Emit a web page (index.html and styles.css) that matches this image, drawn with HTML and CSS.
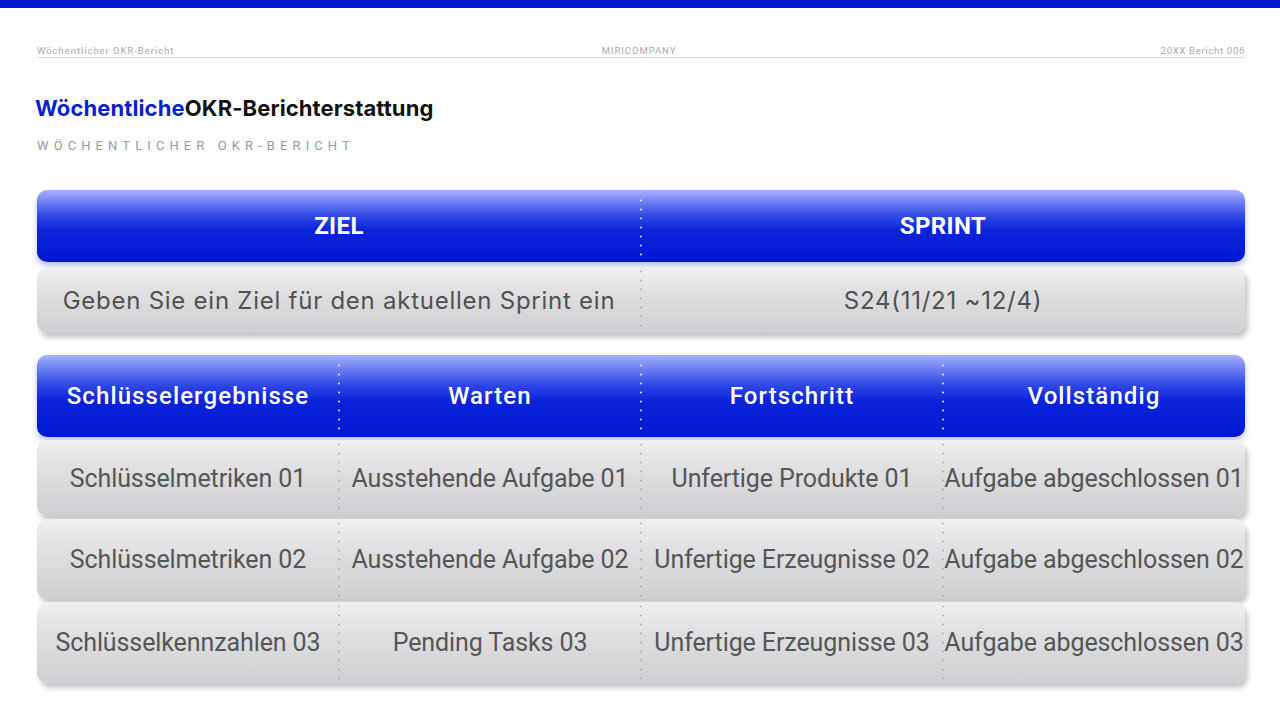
FILE: index.html
```html
<!DOCTYPE html>
<html lang="de">
<head>
<meta charset="utf-8">
<link rel="stylesheet" href="styles.css">
</head>
<body>
<div class="topbar"></div>
<div class="page">
  <header class="meta">
    <span class="meta-left">Wöchentlicher OKR-Bericht</span>
    <span class="meta-center">MIRICOMPANY</span>
    <span class="meta-right">20XX Bericht 006</span>
  </header>
  <h1 class="title"><span class="accent">Wöchentliche</span>OKR-Berichterstattung</h1>
  <p class="subtitle">WÖCHENTLICHER OKR-BERICHT</p>

  <section class="table two">
    <div class="row head">
      <div class="cell">ZIEL</div>
      <div class="cell">SPRINT</div>
    </div>
    <div class="row body goal">
      <div class="cell">Geben Sie ein Ziel für den aktuellen Sprint ein</div>
      <div class="cell">S24(11/21 ~12/4)</div>
    </div>
  </section>

  <section class="table four">
    <div class="row head kr">
      <div class="cell">Schlüsselergebnisse</div>
      <div class="cell">Warten</div>
      <div class="cell">Fortschritt</div>
      <div class="cell">Vollständig</div>
    </div>
    <div class="row body kr-row r1">
      <div class="cell">Schlüsselmetriken 01</div>
      <div class="cell">Ausstehende Aufgabe 01</div>
      <div class="cell">Unfertige Produkte 01</div>
      <div class="cell">Aufgabe abgeschlossen 01</div>
    </div>
    <div class="row body kr-row r2">
      <div class="cell">Schlüsselmetriken 02</div>
      <div class="cell">Ausstehende Aufgabe 02</div>
      <div class="cell">Unfertige Erzeugnisse 02</div>
      <div class="cell">Aufgabe abgeschlossen 02</div>
    </div>
    <div class="row body kr-row r3">
      <div class="cell">Schlüsselkennzahlen 03</div>
      <div class="cell">Pending Tasks 03</div>
      <div class="cell">Unfertige Erzeugnisse 03</div>
      <div class="cell">Aufgabe abgeschlossen 03</div>
    </div>
  </section>
</div>
</body>
</html>
```

FILE: styles.css
```css
* { box-sizing: border-box; margin: 0; padding: 0; }
html, body { width: 1280px; height: 720px; overflow: hidden; background: #fff; }
body { font-family: "Roboto", "Liberation Sans", sans-serif; }

.topbar { height: 8px; background: #0318d2; }

.page { padding: 0 35px 0 37px; }

.meta {
  display: grid;
  grid-template-columns: 1fr auto 1fr;
  align-items: end;
  margin-top: 36px;
  height: 14px;
  padding-bottom: 1px;
  border-bottom: 1px solid #d9d9d9;
  font-size: 9.5px;
  letter-spacing: 0.95px;
  color: #aaaaaa;
}
.meta-center { text-align: center; margin-right: 4px; }
.meta-right { text-align: right; letter-spacing: 0.7px; }

.title {
  margin-top: 37px;
  margin-left: -2px;
  font-family: "Inter", "Roboto", sans-serif;
  font-size: 22px;
  font-weight: 700;
  line-height: 26px;
  color: #121212;
  letter-spacing: 0.1px;
}
.title .accent { color: #0a1fd0; }

.subtitle {
  margin-top: 17px;
  font-size: 13px;
  letter-spacing: 5.1px;
  color: #9a9a9a;
  line-height: 16px;
}

.table { display: flex; flex-direction: column; gap: 5px; }
.table.two { margin-top: 36px; }
.table.four { margin-top: 22px; gap: 3px; }

.row { display: grid; border-radius: 10px; }
.two .row { grid-template-columns: 1fr 1fr; }
.four .row { grid-template-columns: 1fr 1fr 1fr 1fr; }

.head {
  background: linear-gradient(to bottom, #a6b2ff 0%, #7081f4 16%, #3149e6 36%, #0b23d9 56%, #0018d4 100%);
  box-shadow: 0 4px 6px rgba(60, 80, 230, 0.35);
  color: #fff;
}
.body {
  background: linear-gradient(to bottom, #f1f1f3 0%, #e1e1e3 35%, #cfced2 100%);
  box-shadow: 3px 5px 5px rgba(0, 0, 0, 0.22);
  color: #555;
}

.cell {
  display: flex;
  align-items: center;
  justify-content: center;
  white-space: nowrap;
  position: relative;
}
.cell + .cell::before {
  content: "";
  position: absolute;
  left: -1px;
  top: 6px;
  bottom: 6px;
  width: 2px;
  background-image: radial-gradient(circle, currentColor 0.9px, transparent 1.2px);
  background-size: 2px 9px;
  background-repeat: repeat-y;
}
.head .cell + .cell::before { color: rgba(255, 255, 255, 0.85); }
.body .cell + .cell::before { color: rgba(150, 150, 150, 0.6); top: 0; bottom: 0; }

.two .head { height: 72px; }
.two .head .cell { font-size: 24px; font-weight: 700; letter-spacing: 0.4px; }
.goal { height: 66px; }
.goal .cell { font-family: "Inter", "Roboto", sans-serif; font-size: 24px; letter-spacing: 0.75px; color: #505050; }

.kr { height: 82px; }
.kr .cell { font-size: 24px; font-weight: 500; letter-spacing: 1.1px; }
.kr-row.r1 { height: 76px; }
.kr-row.r2 { height: 80px; }
.kr-row.r3 { height: 81px; }
.kr-row .cell { font-size: 25px; color: #555; letter-spacing: -0.1px; }
```
